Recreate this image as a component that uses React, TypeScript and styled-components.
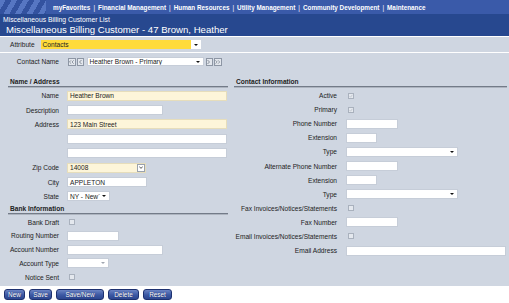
import React from "react";
import styled, { createGlobalStyle } from "styled-components";

const GlobalStyle = createGlobalStyle`
  body {
    margin: 0;
    background: #fff;
    font-family: "Liberation Sans", Arial, sans-serif;
  }
`;

const Page = styled.div`
  width: 509px;
  height: 303px;
  overflow: hidden;
  font-size: 6.6px;
  color: #222;
`;

const NavBar = styled.div`
  height: 14px;
  background: #3a5aa9;
  display: flex;
  align-items: center;
`;

const Stripes = styled.div`
  width: 46px;
  height: 100%;
  background: repeating-linear-gradient(120deg, #5676c2 0 5px, #33529f 5px 10px);
`;

const NavLinks = styled.div`
  margin-left: 7px;
  color: #fff;
  font-weight: bold;
  font-size: 6.35px;
  white-space: nowrap;
`;

const Sep = styled.span`
  margin: 0 3px;
  font-weight: normal;
`;

const Header = styled.div`
  height: 22px;
  background: #27488f;
  color: #fff;
  padding-left: 3px;
  padding-top: 1.5px;
  box-sizing: border-box;
`;

const Breadcrumb = styled.div`
  font-size: 6.8px;
  line-height: 8px;
`;

const Title = styled.div`
  font-size: 9.6px;
  line-height: 11px;
  margin-left: 3px;
`;

const AttributeBar = styled.div`
  margin-top: 1px;
  height: 15px;
  background: #cfd6e1;
  display: flex;
  align-items: center;
  padding-left: 10px;
  gap: 6px;
`;

const YellowSelect = styled.div`
  width: 160px;
  height: 9.5px;
  display: flex;
  background: #ffdb3b;
  box-sizing: border-box;
`;

const YellowText = styled.div`
  flex: 1;
  padding-left: 2px;
  line-height: 9.5px;
`;

const WhiteArrowBox = styled.div`
  width: 10px;
  background: #fff;
  display: flex;
  align-items: center;
  justify-content: center;
`;

const Panel = styled.div`
  margin-top: 1px;
  height: 233px;
  background: #cfd6e1;
  padding-top: 4px;
  box-sizing: border-box;
`;

const ContactRow = styled.div`
  height: 9px;
  display: flex;
  align-items: center;
`;

const ContactLabel = styled.div`
  width: 59px;
  text-align: right;
  margin-right: 9px;
`;

const NavButton = styled.div<{ $w: number }>`
  width: ${(p) => p.$w}px;
  height: 8px;
  box-sizing: border-box;
  border: 1px solid #8d96a4;
  background: #e3e7ed;
  margin-right: 1px;
  display: flex;
  align-items: center;
  justify-content: center;
`;

const Columns = styled.div`
  margin-top: 4px;
  display: grid;
  grid-template-columns: 220px 273px;
  column-gap: 6px;
  padding-left: 8px;
`;

const Column = styled.div<{ $lw: number; $gap: number }>`
  --lw: ${(p) => p.$lw}px;
  --gap: ${(p) => p.$gap}px;
`;

const SectionHeader = styled.div<{ $h: number }>`
  height: ${(p) => p.$h}px;
  display: flex;
  align-items: flex-end;
  padding: 0 0 1px 2px;
  box-sizing: border-box;
  font-weight: bold;
  border-bottom: 1px solid #737b88;
  box-shadow: 0 1px 0 #adb4bf;
  margin-bottom: 1.5px;
`;

const Row = styled.div<{ $h: number }>`
  display: grid;
  grid-template-columns: var(--lw) 1fr;
  column-gap: var(--gap);
  align-items: center;
  height: ${(p) => p.$h}px;
`;

const Label = styled.div`
  text-align: right;
  white-space: nowrap;
`;

const Field = styled.div<{ $w: number; $yellow?: boolean }>`
  width: ${(p) => p.$w}px;
  height: 10px;
  box-sizing: border-box;
  background: ${(p) => (p.$yellow ? "#fdf5d9" : "#fff")};
  border: 1px solid ${(p) => (p.$yellow ? "#e6ddbb" : "#c6cdd8")};
  padding-left: 2px;
  display: flex;
  align-items: center;
  justify-content: space-between;
  white-space: nowrap;
  overflow: hidden;
`;

const Tri = styled.span<{ $muted?: boolean }>`
  width: 0;
  height: 0;
  margin-right: 3px;
  border-left: 2px solid transparent;
  border-right: 2px solid transparent;
  border-top: 2.5px solid ${(p) => (p.$muted ? "#a0a6b0" : "#111")};
`;

const ChevronBox = styled.div`
  width: 8px;
  height: 8px;
  box-sizing: border-box;
  border: 1px solid #9aa2ae;
  background: #fff;
  display: flex;
  align-items: center;
  justify-content: center;
`;

const Box = styled.div`
  width: 6px;
  height: 6px;
  margin-left: 1.5px;
  box-sizing: border-box;
  border: 1px solid #a9b1bd;
  background: #e4e8ee;
  display: flex;
  align-items: center;
  justify-content: center;
`;

const ButtonBar = styled.div`
  display: flex;
  gap: 4px;
  padding: 3px 0 0 4px;
`;

const Button = styled.div<{ $w: number }>`
  width: ${(p) => p.$w}px;
  height: 10.5px;
  box-sizing: border-box;
  border: 1px solid #1d3170;
  border-radius: 3px;
  background: linear-gradient(#6b84c4, #3c58a3 55%, #2c4690);
  color: #fff;
  font-size: 6.4px;
  display: flex;
  align-items: center;
  justify-content: center;
  text-shadow: 0 0 1px #102055;
`;

function Arrow() {
  return <Tri />;
}

function Check({ checked }: { checked?: boolean }) {
  return (
    <Box>
      {checked && (
        <svg width="4" height="4" viewBox="0 0 4 4">
          <path d="M0.6 2.2 L1.6 3.2 L3.4 0.8" stroke="#b6bcc6" strokeWidth="0.7" fill="none" />
        </svg>
      )}
    </Box>
  );
}

function Chevrons({ dir, count }: { dir: "l" | "r"; count: number }) {
  const one = (x: number) =>
    dir === "l" ? `M${x + 2} 1 L${x} 3 L${x + 2} 5` : `M${x} 1 L${x + 2} 3 L${x} 5`;
  return (
    <svg width={count * 3 + 1} height="6" viewBox={`0 0 ${count * 3 + 1} 6`}>
      {Array.from({ length: count }).map((_, i) => (
        <path key={i} d={one(0.5 + i * 3)} stroke="#5a6472" strokeWidth="0.7" fill="none" />
      ))}
    </svg>
  );
}

const navItems = [
  "myFavorites",
  "Financial Management",
  "Human Resources",
  "Utility Management",
  "Community Development",
  "Maintenance",
];

const L_ROW = 14.4;
const BANK_ROW = 13.8;
const R_ROW = 14.1;

export default function App() {
  return (
    <Page>
      <GlobalStyle />
      <NavBar>
        <Stripes />
        <NavLinks>
          {navItems.map((n, i) => (
            <React.Fragment key={n}>
              {i > 0 && <Sep>|</Sep>}
              {n}
            </React.Fragment>
          ))}
        </NavLinks>
      </NavBar>
      <Header>
        <Breadcrumb>Miscellaneous Billing Customer List</Breadcrumb>
        <Title>Miscellaneous Billing Customer - 47 Brown, Heather</Title>
      </Header>
      <AttributeBar>
        <span>Attribute</span>
        <YellowSelect>
          <YellowText>Contacts</YellowText>
          <WhiteArrowBox>
            <Tri style={{ marginRight: 0 }} />
          </WhiteArrowBox>
        </YellowSelect>
      </AttributeBar>
      <Panel>
        <ContactRow>
          <ContactLabel>Contact Name</ContactLabel>
          <NavButton $w={8}>
            <Chevrons dir="l" count={2} />
          </NavButton>
          <NavButton $w={7}>
            <Chevrons dir="l" count={1} />
          </NavButton>
          <Field $w={117} style={{ marginLeft: 1.5, marginRight: 2, height: 9 }}>
            Heather Brown - Primary
            <Arrow />
          </Field>
          <NavButton $w={7}>
            <Chevrons dir="r" count={1} />
          </NavButton>
          <NavButton $w={8}>
            <Chevrons dir="r" count={2} />
          </NavButton>
        </ContactRow>
        <Columns>
          <Column $lw={51} $gap={8}>
            <SectionHeader $h={17}>Name / Address</SectionHeader>
            <Row $h={L_ROW}>
              <Label>Name</Label>
              <Field $w={160} $yellow>Heather Brown</Field>
            </Row>
            <Row $h={L_ROW}>
              <Label>Description</Label>
              <Field $w={96} />
            </Row>
            <Row $h={L_ROW}>
              <Label>Address</Label>
              <Field $w={160} $yellow>123 Main Street</Field>
            </Row>
            <Row $h={L_ROW}>
              <Label />
              <Field $w={160} />
            </Row>
            <Row $h={L_ROW}>
              <Label />
              <Field $w={160} />
            </Row>
            <Row $h={L_ROW}>
              <Label>Zip Code</Label>
              <Field $w={79} $yellow>
                14008
                <ChevronBox>
                  <svg width="4" height="3" viewBox="0 0 4 3">
                    <path d="M0.3 0.5 L2 2.4 L3.7 0.5" stroke="#333" strokeWidth="0.8" fill="none" />
                  </svg>
                </ChevronBox>
              </Field>
            </Row>
            <Row $h={L_ROW}>
              <Label>City</Label>
              <Field $w={80}>APPLETON</Field>
            </Row>
            <Row $h={L_ROW}>
              <Label>State</Label>
              <Field $w={43}>
                NY - New`
                <Arrow />
              </Field>
            </Row>
            <SectionHeader $h={10}>Bank Information</SectionHeader>
            <Row $h={BANK_ROW}>
              <Label>Bank Draft</Label>
              <Check />
            </Row>
            <Row $h={BANK_ROW}>
              <Label>Routing Number</Label>
              <Field $w={52} />
            </Row>
            <Row $h={BANK_ROW}>
              <Label>Account Number</Label>
              <Field $w={96} />
            </Row>
            <Row $h={BANK_ROW}>
              <Label>Account Type</Label>
              <Field $w={42}>
                <span />
                <Tri $muted />
              </Field>
            </Row>
            <Row $h={BANK_ROW}>
              <Label>Notice Sent</Label>
              <Check />
            </Row>
          </Column>
          <Column $lw={103} $gap={9}>
            <SectionHeader $h={17}>Contact Information</SectionHeader>
            <Row $h={R_ROW}>
              <Label>Active</Label>
              <Check checked />
            </Row>
            <Row $h={R_ROW}>
              <Label>Primary</Label>
              <Check checked />
            </Row>
            <Row $h={R_ROW}>
              <Label>Phone Number</Label>
              <Field $w={52} />
            </Row>
            <Row $h={R_ROW}>
              <Label>Extension</Label>
              <Field $w={31} />
            </Row>
            <Row $h={R_ROW}>
              <Label>Type</Label>
              <Field $w={112}>
                <span />
                <Arrow />
              </Field>
            </Row>
            <Row $h={R_ROW}>
              <Label>Alternate Phone Number</Label>
              <Field $w={52} />
            </Row>
            <Row $h={R_ROW}>
              <Label>Extension</Label>
              <Field $w={31} />
            </Row>
            <Row $h={R_ROW}>
              <Label>Type</Label>
              <Field $w={112}>
                <span />
                <Arrow />
              </Field>
            </Row>
            <Row $h={R_ROW}>
              <Label>Fax Invoices/Notices/Statements</Label>
              <Check />
            </Row>
            <Row $h={R_ROW}>
              <Label>Fax Number</Label>
              <Field $w={52} />
            </Row>
            <Row $h={R_ROW}>
              <Label>Email Invoices/Notices/Statements</Label>
              <Check />
            </Row>
            <Row $h={R_ROW}>
              <Label>Email Address</Label>
              <Field $w={160} />
            </Row>
          </Column>
        </Columns>
      </Panel>
      <ButtonBar>
        <Button $w={21}>New</Button>
        <Button $w={23}>Save</Button>
        <Button $w={48}>Save/New</Button>
        <Button $w={31}>Delete</Button>
        <Button $w={29}>Reset</Button>
      </ButtonBar>
    </Page>
  );
}
